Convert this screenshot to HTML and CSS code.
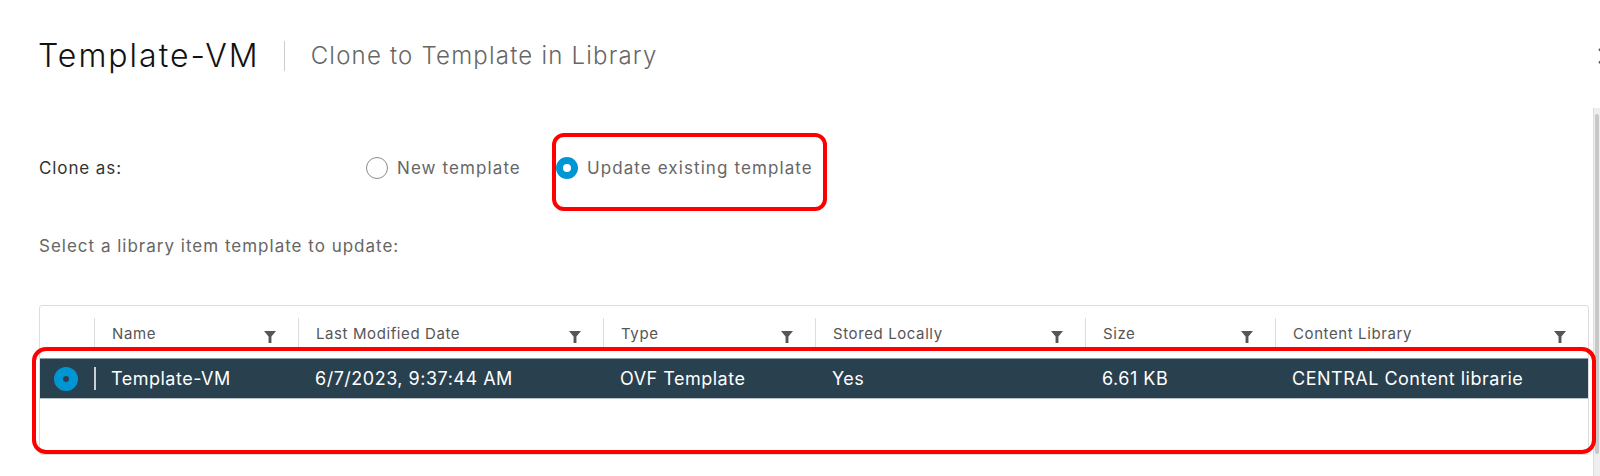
FILE: index.html
```html
<!DOCTYPE html>
<html lang="en">
<head>
	<meta charset="UTF-8">
	<title>Clone to Template in Library</title>
	<link rel="stylesheet" href="styles.css">
</head>
<body>
	<div class="dialog">
		<div class="dialog-header">
			<h1 class="title">Template-VM</h1>
			<span class="divider"></span>
			<h2 class="subtitle">Clone to Template in Library</h2>
			<button class="close" type="button">
				<svg width="20" height="20" viewBox="0 0 20 20"><path d="M3 3 L17 17 M17 3 L3 17" stroke="#555" stroke-width="2" fill="none"/></svg>
			</button>
		</div>
		<div class="dialog-body">
			<div class="content">
				<div class="form-row">
					<span class="form-label">Clone as:</span>
					<div class="radios">
						<label class="radio"><span class="radio-dot"></span>New template</label>
						<label class="radio checked"><span class="radio-dot"></span>Update existing template</label>
					</div>
				</div>
				<p class="hint">Select a library item template to update:</p>

				<div class="grid">
					<div class="grid-head">
						<div class="cell cell-select"></div>
						<div class="cell col-name">Name <span class="filter"></span></div>
						<div class="cell col-date">Last Modified Date <span class="filter"></span></div>
						<div class="cell col-type">Type <span class="filter"></span></div>
						<div class="cell col-stored">Stored Locally <span class="filter"></span></div>
						<div class="cell col-size">Size <span class="filter"></span></div>
						<div class="cell col-lib">Content Library <span class="filter"></span></div>
					</div>
					<div class="grid-row selected">
						<div class="cell cell-select"><span class="row-radio"></span></div>
						<div class="cell col-name">Template-VM</div>
						<div class="cell col-date">6/7/2023, 9:37:44 AM</div>
						<div class="cell col-type">OVF Template</div>
						<div class="cell col-stored">Yes</div>
						<div class="cell col-size">6.61 KB</div>
						<div class="cell col-lib">CENTRAL Content librarie</div>
					</div>
				</div>
			</div>
			<div class="scrollbar"><div class="thumb"></div></div>
		</div>
	</div>

	<!-- red annotation boxes drawn over the screenshot -->
	<div class="mark mark-radio"></div>
	<div class="mark mark-row"></div>
</body>
</html>
```

FILE: styles.css
```css
*{
	margin: 0;
	padding: 0;
	box-sizing: border-box;
}
body{
	width: 1600px;
	height: 476px;
	overflow: hidden;
	background: #fff;
	font-family: "Inter", "Liberation Sans", sans-serif;
	color: #333;
	position: relative;
}
.dialog{
	height: 476px;
	overflow: hidden;
}
.dialog-header{
	height: 108px;
	display: flex;
	align-items: center;
	padding: 4px 0 0 38px;
}
.title{
	font-size: 32px;
	font-weight: 300;
	letter-spacing: 2px;
	color: #111;
	line-height: 40px;
}
.divider{
	width: 1px;
	height: 30px;
	background: #ccc;
	margin: 0 26px 0 24px;
}
.subtitle{
	font-size: 24px;
	font-weight: 300;
	letter-spacing: 1.2px;
	color: #666;
	line-height: 40px;
}
.close{
	margin-left: auto;
	margin-right: -16px;
	border: 0;
	background: none;
	display: flex;
}
.dialog-body{
	display: flex;
	height: 368px;
}
.content{
	flex: 1;
	padding: 48px 4px 0 39px;
}
.scrollbar{
	width: 7px;
	background: #eee;
	border-left: 1px solid #ddd;
	padding-top: 6px;
}
.thumb{
	width: 4px;
	height: 340px;
	margin-left: 1px;
	background: #c8c8c8;
	border-radius: 3px;
}
.form-row{
	display: flex;
	align-items: center;
	height: 24px;
}
.form-label{
	width: 327px;
	font-size: 17px;
	letter-spacing: 0.9px;
	color: #333;
}
.radios{
	display: flex;
	gap: 35px;
}
.radio{
	display: flex;
	align-items: center;
	gap: 9px;
	font-size: 17px;
	letter-spacing: 1.1px;
	color: #666;
}
.radio-dot{
	width: 22px;
	height: 22px;
	border-radius: 50%;
	border: 1px solid #8c8c8c;
	background: #fff;
}
.radio.checked .radio-dot{
	border: 7px solid #0095d3;
}
.hint{
	margin-top: 56px;
	font-size: 17px;
	letter-spacing: 1px;
	color: #666;
	line-height: 20px;
}
.grid{
	margin-top: 49px;
	border: 1px solid #ddd;
	border-radius: 3px;
	height: 150px;
}
.grid-head,
.grid-row{
	display: flex;
}
.grid-head{
	height: 52px;
	align-items: center;
	font-size: 15px;
	letter-spacing: 0.6px;
	color: #565656;
}
.grid-head .cell{
	height: 30px;
	margin-top: 2px;
	border-left: 1px solid #ddd;
}
.grid-head .cell-select{
	border-left: 0;
}
.cell{
	display: flex;
	align-items: center;
	padding: 0 0 0 17px;
}
.cell-select{ width: 54px; }
.col-name{ width: 204px; }
.col-date{ width: 305px; }
.col-type{ width: 212px; }
.col-stored{ width: 270px; }
.col-size{ width: 190px; }
.col-lib{ flex: 1; }
.filter{
	margin-left: auto;
	margin-right: 22px;
	margin-top: 8px;
	width: 12px;
	height: 12px;
	background: #565656;
	clip-path: polygon(0 0, 100% 0, 62% 45%, 62% 100%, 38% 100%, 38% 45%);
}
.grid-row{
	height: 41px;
	background: #29404e;
	color: #fff;
	font-size: 18px;
	letter-spacing: 0.5px;
	border-top: 1px solid #8a9aa4;
	border-bottom: 1px solid #b9c2c8;
}
.grid-row .cell{
	height: 100%;
}
.grid-row .cell-select{
	padding-left: 14px;
}
.grid-row .col-name{
	position: relative;
}
.grid-row .col-name::before{
	content: "";
	position: absolute;
	left: 0;
	top: 8px;
	bottom: 8px;
	width: 2px;
	background: #c9d0d4;
}
.row-radio{
	width: 24px;
	height: 24px;
	border-radius: 50%;
	border: 9px solid #0095d3;
	background: #29404e;
}
.mark{
	position: absolute;
	border: 4px solid #f00;
}
.mark-radio{
	left: 552px;
	top: 133px;
	width: 275px;
	height: 78px;
	border-radius: 12px;
}
.mark-row{
	left: 32px;
	top: 347px;
	width: 1564px;
	height: 107px;
	border-radius: 14px;
}
```
